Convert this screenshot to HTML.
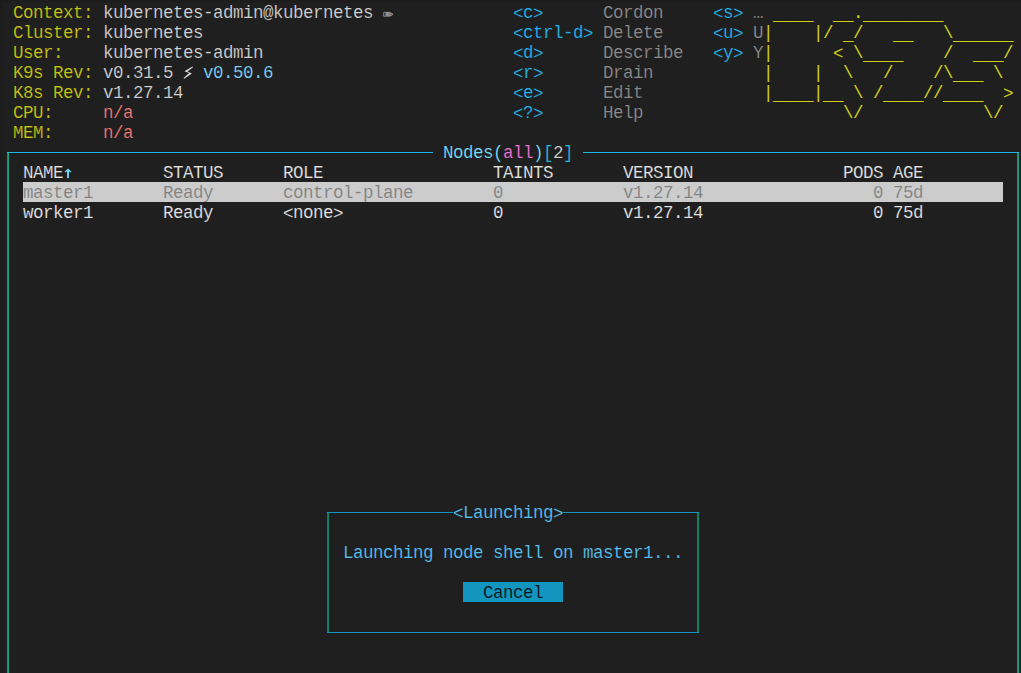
<!DOCTYPE html>
<html><head><meta charset="utf-8"><title>k9s</title>
<style>
html,body{margin:0;padding:0;}
body{width:1021px;height:673px;overflow:hidden;background:#1c1c1c;position:relative;
 font-family:"Liberation Mono",monospace;font-size:17.5px;line-height:20px;letter-spacing:-0.5017px;}
#term{position:absolute;left:3px;top:2px;width:1018px;height:671px;background:#1f1f1f;overflow:hidden;}
.t{position:absolute;white-space:pre;height:20px;margin-top:1.4px;-webkit-text-stroke:0.14px #1f1f1f;}
.b{font-weight:bold;}
i{font-style:normal;position:relative;top:1px;}
.us{margin-top:3.4px;}
.y{color:#c5c511;}
.w{color:#d0d0d0;}
.lb{color:#80d2f8;}
.r{color:#f07872;}
.k{color:#22b4ee;}
.g{color:#8a8a8a;}
.lg{color:#d0d016;-webkit-text-stroke:0;}
.tt{color:#78dcf8;}
.mg{color:#ee6fd6;}
.cy{color:#29b8db;}
.h{color:#e4e4e4;}
.sel{color:#828282;-webkit-text-stroke-color:#cccccc;margin-top:0;padding:1.4px 1px 0 0;box-sizing:border-box;overflow:hidden;}
.dl{color:#5ac0ee;}
.btn{color:#0c1418;-webkit-text-stroke-color:#1296c0;}
.ln{position:absolute;background:#1eb8e8;}
.lv{position:absolute;width:2px;background:linear-gradient(to right,#2378dc 50%,#1ea082 50%);}
.dn{position:absolute;background:#1496c2;}
.dv{position:absolute;width:2px;background:linear-gradient(to right,#1e64b4 50%,#148264 50%);}
</style></head><body><div id="term">
<div style="position:absolute;left:20px;top:180px;width:980px;height:20px;background:#cccccc"></div>
<div style="position:absolute;left:460px;top:580px;width:100px;height:20px;background:#1296c0"></div>
<div class="lv" style="left:4px;top:150px;height:600px"></div>
<div class="lv" style="left:1014px;top:150px;height:600px"></div>
<div class="ln" style="left:4px;top:150px;width:426px;height:1px"></div>
<div class="ln" style="left:580px;top:150px;width:436px;height:1px"></div>
<div class="dv" style="left:324px;top:510px;height:121px"></div>
<div class="dv" style="left:694px;top:510px;height:121px"></div>
<div class="dn" style="left:324px;top:510px;width:126px;height:1px"></div>
<div class="dn" style="left:560px;top:510px;width:136px;height:1px"></div>
<div class="dn" style="left:324px;top:630px;width:372px;height:1px"></div>
<svg style="position:absolute;left:60px;top:160px" width="10" height="20" viewBox="0 0 10 20"><rect x="4.1" y="8" width="1.9" height="8.1" fill="#6fd6f8"/><polygon points="5.05,6.4 8.5,9.7 7.4,10.5 5.05,8.4 2.7,10.5 1.6,9.7" fill="#6fd6f8"/></svg>
<svg style="position:absolute;left:180px;top:60px" width="10" height="20" viewBox="0 0 10 20"><polygon points="9.5,4.5 1.4,9.2 6.2,11.1 0.6,16.0 1.2,16.7 8.9,11.4 4.4,9.6 10.1,5.2" fill="#dcdcdc"/></svg>
<svg style="position:absolute;left:380px;top:0px" width="11" height="20" viewBox="0 0 11 20"><rect x="0.3" y="10.2" width="2.8" height="4.2" rx="1.2" fill="#3a4050" stroke="#8f9ab4" stroke-width="0.9"/><rect x="3.0" y="9.8" width="3.7" height="4.9" fill="#8c8c8c"/><polygon points="7.0,10.5 10.1,12.3 7.0,14.1" fill="#4a4640" stroke="#b8aca0" stroke-width="0.8"/></svg>
<span class="t y" style="left:10px;top:0px">Context:</span>
<span class="t y" style="left:10px;top:20px">Cluster:</span>
<span class="t y" style="left:10px;top:40px">User:</span>
<span class="t y" style="left:10px;top:60px">K9s Rev:</span>
<span class="t y" style="left:10px;top:80px">K8s Rev:</span>
<span class="t y" style="left:10px;top:100px">CPU:</span>
<span class="t y" style="left:10px;top:120px">MEM:</span>
<span class="t w" style="left:100px;top:0px">kubernetes-admin@kubernetes</span>
<span class="t w" style="left:100px;top:20px">kubernetes</span>
<span class="t w" style="left:100px;top:40px">kubernetes-admin</span>
<span class="t w" style="left:100px;top:60px">v0.31.5</span>
<span class="t lb" style="left:200px;top:60px">v0.50.6</span>
<span class="t w" style="left:100px;top:80px">v1.27.14</span>
<span class="t r" style="left:100px;top:100px">n/a</span>
<span class="t r" style="left:100px;top:120px">n/a</span>
<span class="t k" style="left:510px;top:0px"><i>&lt;</i>c<i>&gt;</i></span>
<span class="t g" style="left:600px;top:0px">Cordon</span>
<span class="t k" style="left:510px;top:20px"><i>&lt;</i>ctrl-d<i>&gt;</i></span>
<span class="t g" style="left:600px;top:20px">Delete</span>
<span class="t k" style="left:510px;top:40px"><i>&lt;</i>d<i>&gt;</i></span>
<span class="t g" style="left:600px;top:40px">Describe</span>
<span class="t k" style="left:510px;top:60px"><i>&lt;</i>r<i>&gt;</i></span>
<span class="t g" style="left:600px;top:60px">Drain</span>
<span class="t k" style="left:510px;top:80px"><i>&lt;</i>e<i>&gt;</i></span>
<span class="t g" style="left:600px;top:80px">Edit</span>
<span class="t k" style="left:510px;top:100px"><i>&lt;</i>?<i>&gt;</i></span>
<span class="t g" style="left:600px;top:100px">Help</span>
<span class="t k" style="left:710px;top:0px"><i>&lt;</i>s<i>&gt;</i></span>
<span class="t g" style="left:750px;top:0px">…</span>
<span class="t k" style="left:710px;top:20px"><i>&lt;</i>u<i>&gt;</i></span>
<span class="t g" style="left:750px;top:20px">U</span>
<span class="t k" style="left:710px;top:40px"><i>&lt;</i>y<i>&gt;</i></span>
<span class="t g" style="left:750px;top:40px">Y</span>
<span class="t lg" style="left:760px;top:0px">         .               </span>
<span class="t lg us" style="left:760px;top:0px"> ____  __ ________       </span>
<span class="t lg" style="left:760px;top:20px">|    |/  /        \      </span>
<span class="t lg us" style="left:760px;top:20px">        _    __    ______</span>
<span class="t lg" style="left:760px;top:40px">|      <i>&lt;</i> \        /     /</span>
<span class="t lg us" style="left:760px;top:40px">          ____       ___ </span>
<span class="t lg" style="left:760px;top:60px">|    |  \   /    /\    \ </span>
<span class="t lg us" style="left:760px;top:60px">                   ___   </span>
<span class="t lg" style="left:760px;top:80px">|    |   \ /    //      <i>&gt;</i></span>
<span class="t lg us" style="left:760px;top:80px"> ____ __    ____  ____   </span>
<span class="t lg" style="left:760px;top:100px">        \/            \/ </span>
<span class="t lg us" style="left:760px;top:100px">                         </span>
<span class="t tt" style="left:440px;top:140px">Nodes(</span>
<span class="t mg" style="left:500px;top:140px">all</span>
<span class="t tt" style="left:530px;top:140px">)</span>
<span class="t cy" style="left:540px;top:140px">[</span>
<span class="t w" style="left:550px;top:140px">2</span>
<span class="t cy" style="left:560px;top:140px">]</span>
<span class="t h" style="left:20px;top:160px">NAME</span>
<span class="t h" style="left:160px;top:160px">STATUS</span>
<span class="t h" style="left:280px;top:160px">ROLE</span>
<span class="t h" style="left:490px;top:160px">TAINTS</span>
<span class="t h" style="left:620px;top:160px">VERSION</span>
<span class="t h" style="left:840px;top:160px">PODS</span>
<span class="t h" style="left:890px;top:160px">AGE</span>
<span class="t sel" style="left:20px;top:180px">master1</span>
<span class="t sel" style="left:160px;top:180px">Ready</span>
<span class="t sel" style="left:280px;top:180px">control-plane</span>
<span class="t sel" style="left:490px;top:180px">0</span>
<span class="t sel" style="left:620px;top:180px">v1.27.14</span>
<span class="t sel" style="left:870px;top:180px">0</span>
<span class="t sel" style="left:890px;top:180px">75d</span>
<span class="t h" style="left:20px;top:200px">worker1</span>
<span class="t h" style="left:160px;top:200px">Ready</span>
<span class="t h" style="left:280px;top:200px"><i>&lt;</i>none<i>&gt;</i></span>
<span class="t h" style="left:490px;top:200px">0</span>
<span class="t h" style="left:620px;top:200px">v1.27.14</span>
<span class="t h" style="left:870px;top:200px">0</span>
<span class="t h" style="left:890px;top:200px">75d</span>
<span class="t dl" style="left:450px;top:500px"><i>&lt;</i>Launching<i>&gt;</i></span>
<span class="t dl" style="left:340px;top:540px">Launching node shell on master1...</span>
<span class="t btn" style="left:480px;top:580px">Cancel</span>
</div></body></html>
